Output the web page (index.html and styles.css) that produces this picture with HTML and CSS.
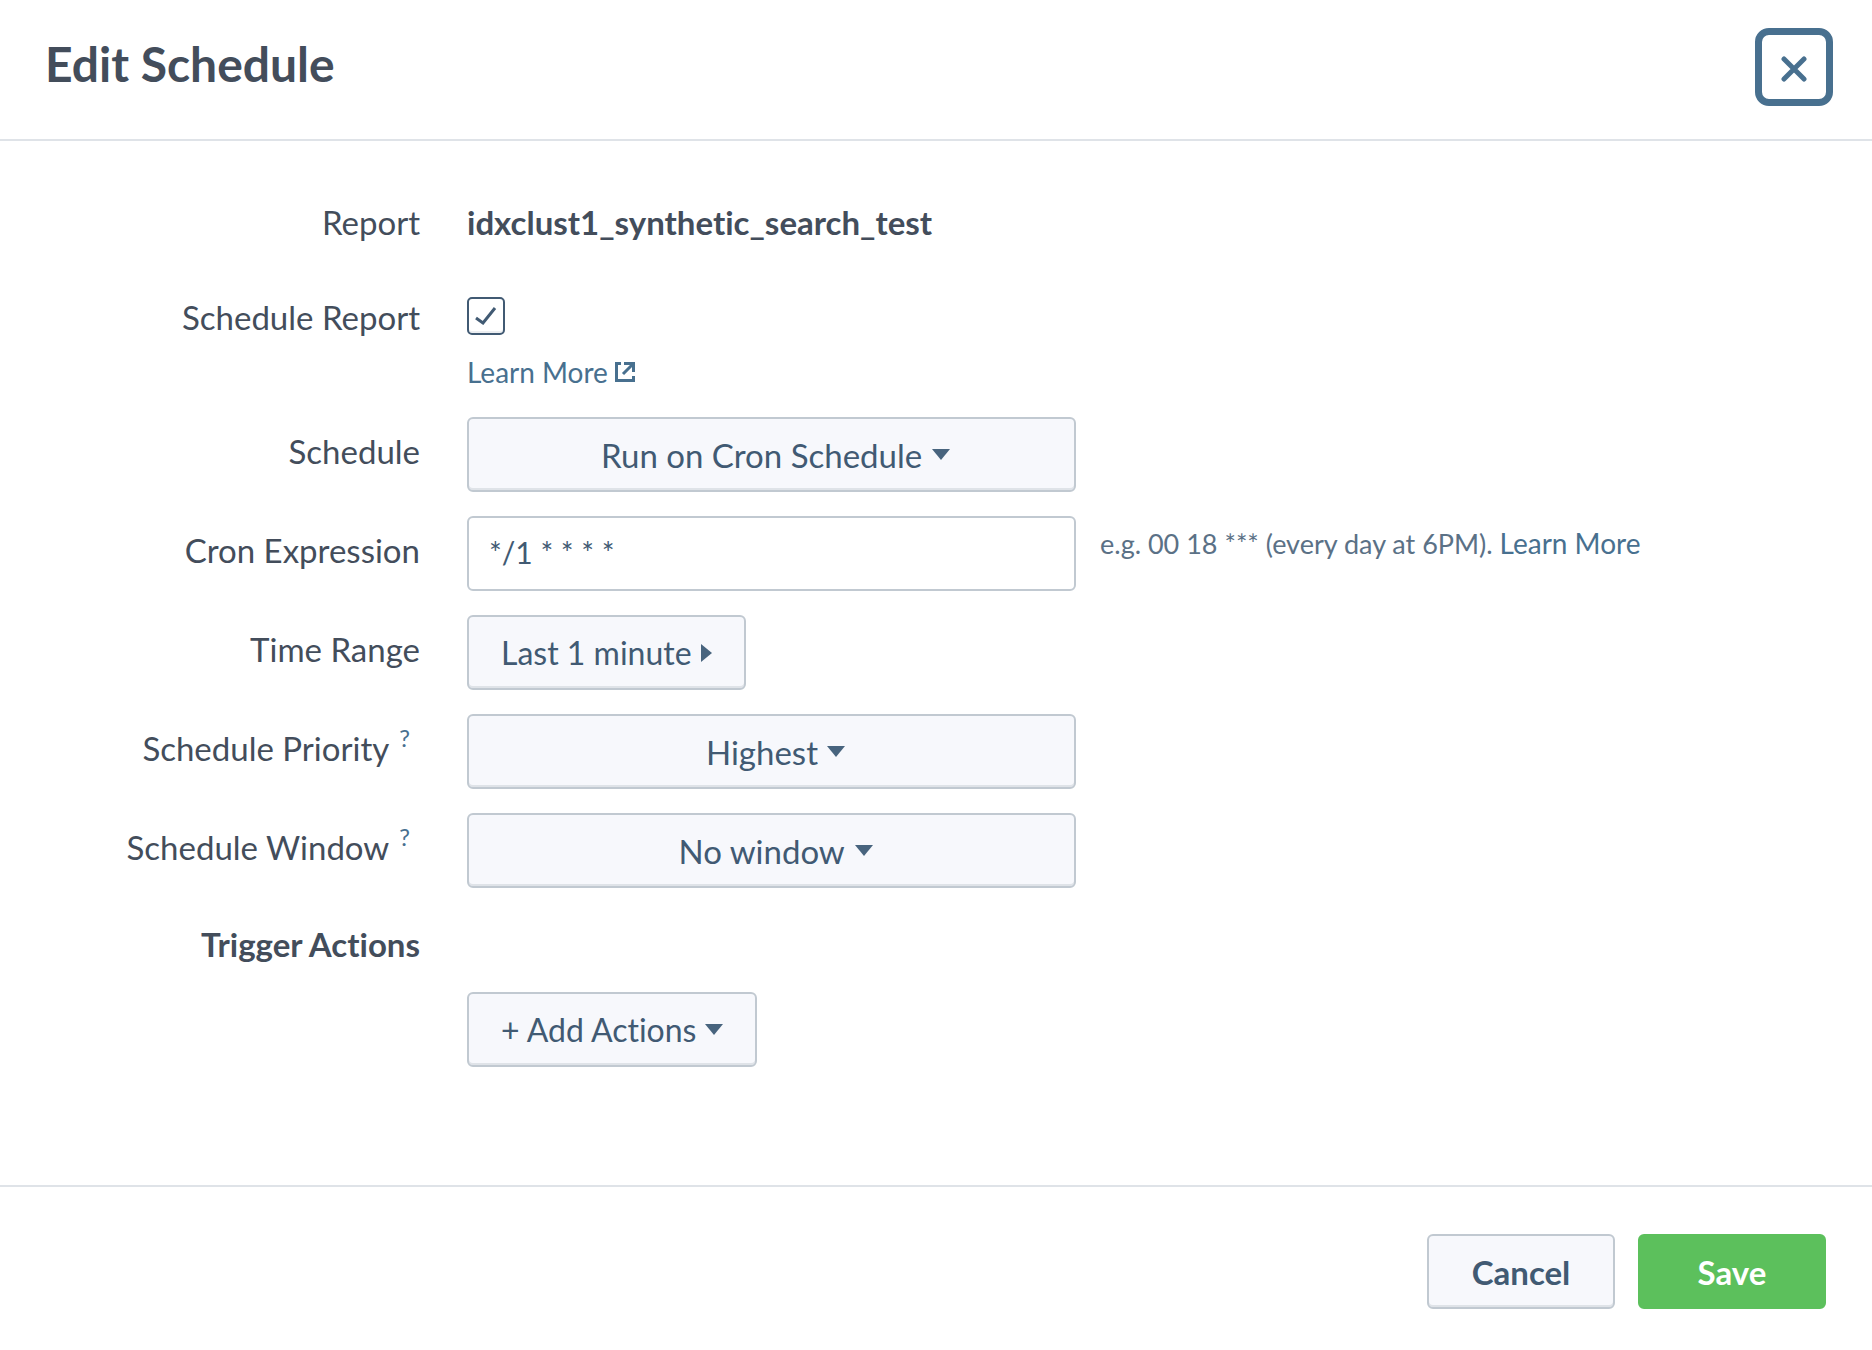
FILE: index.html
```html
<!DOCTYPE html>
<html lang="en">
<head>
    <meta charset="UTF-8">
    <meta name="viewport" content="width=device-width, initial-scale=1.0">
    <title>Edit Schedule</title>
    <link rel="stylesheet" href="styles.css">
</head>
<body>
    <header class="modal-header">
        <h1>Edit Schedule</h1>
        <button type="button" class="close" aria-label="Close">
            <svg width="26" height="26" viewBox="0 0 26 26"><path d="M3 3L23 23M23 3L3 23"/></svg>
        </button>
    </header>

    <form class="modal-form" id="scheduleForm">
        <div class="row row-report">
            <span class="label">Report</span>
            <strong class="report-name">idxclust1_synthetic_search_test</strong>
        </div>

        <div class="row row-check">
            <label class="label" for="scheduleReport">Schedule Report</label>
            <div class="check-group">
                <span class="checkbox">
                    <input type="checkbox" id="scheduleReport" checked>
                    <svg class="tick" width="22" height="18" viewBox="0 0 22 18"><path d="M1 11L8 16L20 1"/></svg>
                </span>
                <a class="learn-more" href="#">Learn More
                    <svg width="20" height="20" viewBox="0 0 20 20"><path d="M6 1.5H1.5V18.5H18.5V14M9 1.5H18.5V10M18 2L8 12"/></svg>
                </a>
            </div>
        </div>

        <div class="row">
            <label class="label" for="schedule">Schedule</label>
            <div class="control select-box">
                <select id="schedule"><option>Run on Cron Schedule</option></select>
                <svg class="caret" width="18" height="11" viewBox="0 0 18 11"><path d="M0 0H18L9 11Z"/></svg>
            </div>
        </div>

        <div class="row">
            <label class="label" for="cron">Cron Expression</label>
            <div class="cron-group">
                <input type="text" class="control" id="cron" value="*/1 * * * *">
                <span class="hint">e.g. 00 18 *** (every day at 6PM). <a href="#">Learn More</a></span>
            </div>
        </div>

        <div class="row">
            <label class="label" for="timeRange">Time Range</label>
            <button type="button" class="btn" id="timeRange">Last 1 minute
                <svg class="caret" width="11" height="18" viewBox="0 0 11 18"><path d="M0 0V18L11 9Z"/></svg>
            </button>
        </div>

        <div class="row">
            <div class="label with-help"><label for="priority">Schedule Priority</label><a class="help" href="#">?</a></div>
            <div class="control select-box">
                <select id="priority"><option>Highest</option></select>
                <svg class="caret" width="18" height="11" viewBox="0 0 18 11"><path d="M0 0H18L9 11Z"/></svg>
            </div>
        </div>

        <div class="row">
            <div class="label with-help"><label for="window">Schedule Window</label><a class="help" href="#">?</a></div>
            <div class="control select-box">
                <select id="window"><option>No window</option></select>
                <svg class="caret" width="18" height="11" viewBox="0 0 18 11"><path d="M0 0H18L9 11Z"/></svg>
            </div>
        </div>

        <div class="row row-heading">
            <h2 class="label">Trigger Actions</h2>
        </div>

        <div class="row">
            <button type="button" class="btn add-actions">+ Add Actions
                <svg class="caret" width="18" height="11" viewBox="0 0 18 11"><path d="M0 0H18L9 11Z"/></svg>
            </button>
        </div>
    </form>

    <footer class="modal-footer">
        <button type="button" class="btn btn-wide">Cancel</button>
        <button type="submit" form="scheduleForm" class="btn btn-wide btn-primary">Save</button>
    </footer>
</body>
</html>
```
FILE: styles.css
```css
* {
    margin: 0;
    padding: 0;
    box-sizing: border-box;
}

body {
    min-height: 100vh;
    display: flex;
    flex-direction: column;
    background: #fff;
    color: #434d5b;
    font-family: Lato, "Liberation Sans", sans-serif;
    font-size: 33px;
    font-variant-ligatures: none;
    line-height: 40px;
}

button,
input,
select {
    font: inherit;
    font-variant-ligatures: none;
    color: #415a73;
}

a {
    color: #48708f;
    text-decoration: none;
}

svg {
    flex: none;
    fill: none;
    stroke: #48708f;
}

/* header */
.modal-header {
    display: flex;
    align-items: flex-start;
    justify-content: space-between;
    padding: 28px 39px 33px 45px;
    border-bottom: 2px solid #dfe3e8;
}

h1 {
    padding-top: 8px;
    font-size: 48px;
    font-weight: 700;
    line-height: 56px;
}

.close {
    display: flex;
    align-items: center;
    justify-content: center;
    width: 78px;
    height: 78px;
    padding-top: 4px;
    background: #fff;
    border: 7px solid #48708f;
    border-radius: 14px;
    cursor: pointer;
}

.close svg {
    stroke-width: 5;
    stroke-linecap: round;
}

/* form rows */
.modal-form {
    flex: 1;
    display: flex;
    flex-direction: column;
    gap: 24px;
    padding: 61px 46px 48px 0;
}

.row {
    display: grid;
    grid-template-columns: 420px 1fr;
    column-gap: 47px;
    align-items: start;
    justify-items: start;
}

.label {
    justify-self: end;
    padding-top: 14px;
}

.row-report {
    min-height: 71px;
}

.row-report .label,
.row-check .label {
    padding-top: 0;
}

.row-heading {
    min-height: 56px;
}

.row-heading .label {
    padding-top: 12px;
    font-size: 33px;
    font-weight: 700;
}

.with-help {
    display: flex;
    gap: 10px;
    padding-right: 10px;
}

.help {
    font-size: 24px;
    line-height: 20px;
}

.control {
    width: 100%;
    max-width: 609px;
    height: 75px;
    border: 2px solid #c1c9d1;
    border-radius: 6px;
    background: #fff;
}

.select-box,
.btn {
    display: flex;
    align-items: center;
    justify-content: center;
    gap: 9px;
    background: #f7f8fc;
    box-shadow: inset 0 -2px 0 #dfe3e8;
}

.select-box {
    padding-left: 8px;
}

.select-box select {
    appearance: none;
    border: none;
    background: none;
    cursor: pointer;
}

.caret {
    fill: #48647e;
    stroke: none;
}

input.control {
    padding: 0 20px 4px;
    font-size: 30px;
}

.cron-group {
    display: grid;
    grid-template-columns: minmax(0, 609px) auto;
    gap: 24px;
}

.hint {
    padding-top: 7px;
    font-size: 27px;
    color: #5b7186;
}

.hint a {
    font-size: 28px;
}

.check-group {
    display: flex;
    flex-direction: column;
    gap: 16px;
}

.checkbox {
    display: grid;
    place-items: center;
    width: 38px;
    height: 38px;
}

.checkbox input,
.tick {
    grid-area: 1 / 1;
}

.checkbox input {
    appearance: none;
    width: 38px;
    height: 38px;
    border: 2px solid #415a73;
    border-radius: 5px;
    box-shadow: inset 0 -2px 0 #eceef1;
}

.tick {
    visibility: hidden;
    stroke: #415a73;
    stroke-width: 3;
    pointer-events: none;
}

.checkbox input:checked + .tick {
    visibility: visible;
}

.learn-more {
    display: flex;
    align-items: center;
    gap: 7px;
    font-size: 28px;
    line-height: 42px;
}

.learn-more svg {
    stroke-width: 3;
}

/* buttons */
.btn {
    height: 75px;
    padding: 0 32px;
    border: 2px solid #c1c9d1;
    border-radius: 6px;
    font-size: 32px;
    cursor: pointer;
}

.add-actions {
    grid-column: 2;
}

.btn-wide {
    min-width: 188px;
    font-size: 33px;
    font-weight: 700;
}

.btn-primary {
    color: #fff;
    background: #5cc05c;
    border-color: #5cc05c;
    box-shadow: none;
}

/* footer */
.modal-footer {
    display: flex;
    justify-content: flex-end;
    gap: 23px;
    padding: 47px 46px 41px;
    border-top: 2px solid #dfe3e8;
}
```
